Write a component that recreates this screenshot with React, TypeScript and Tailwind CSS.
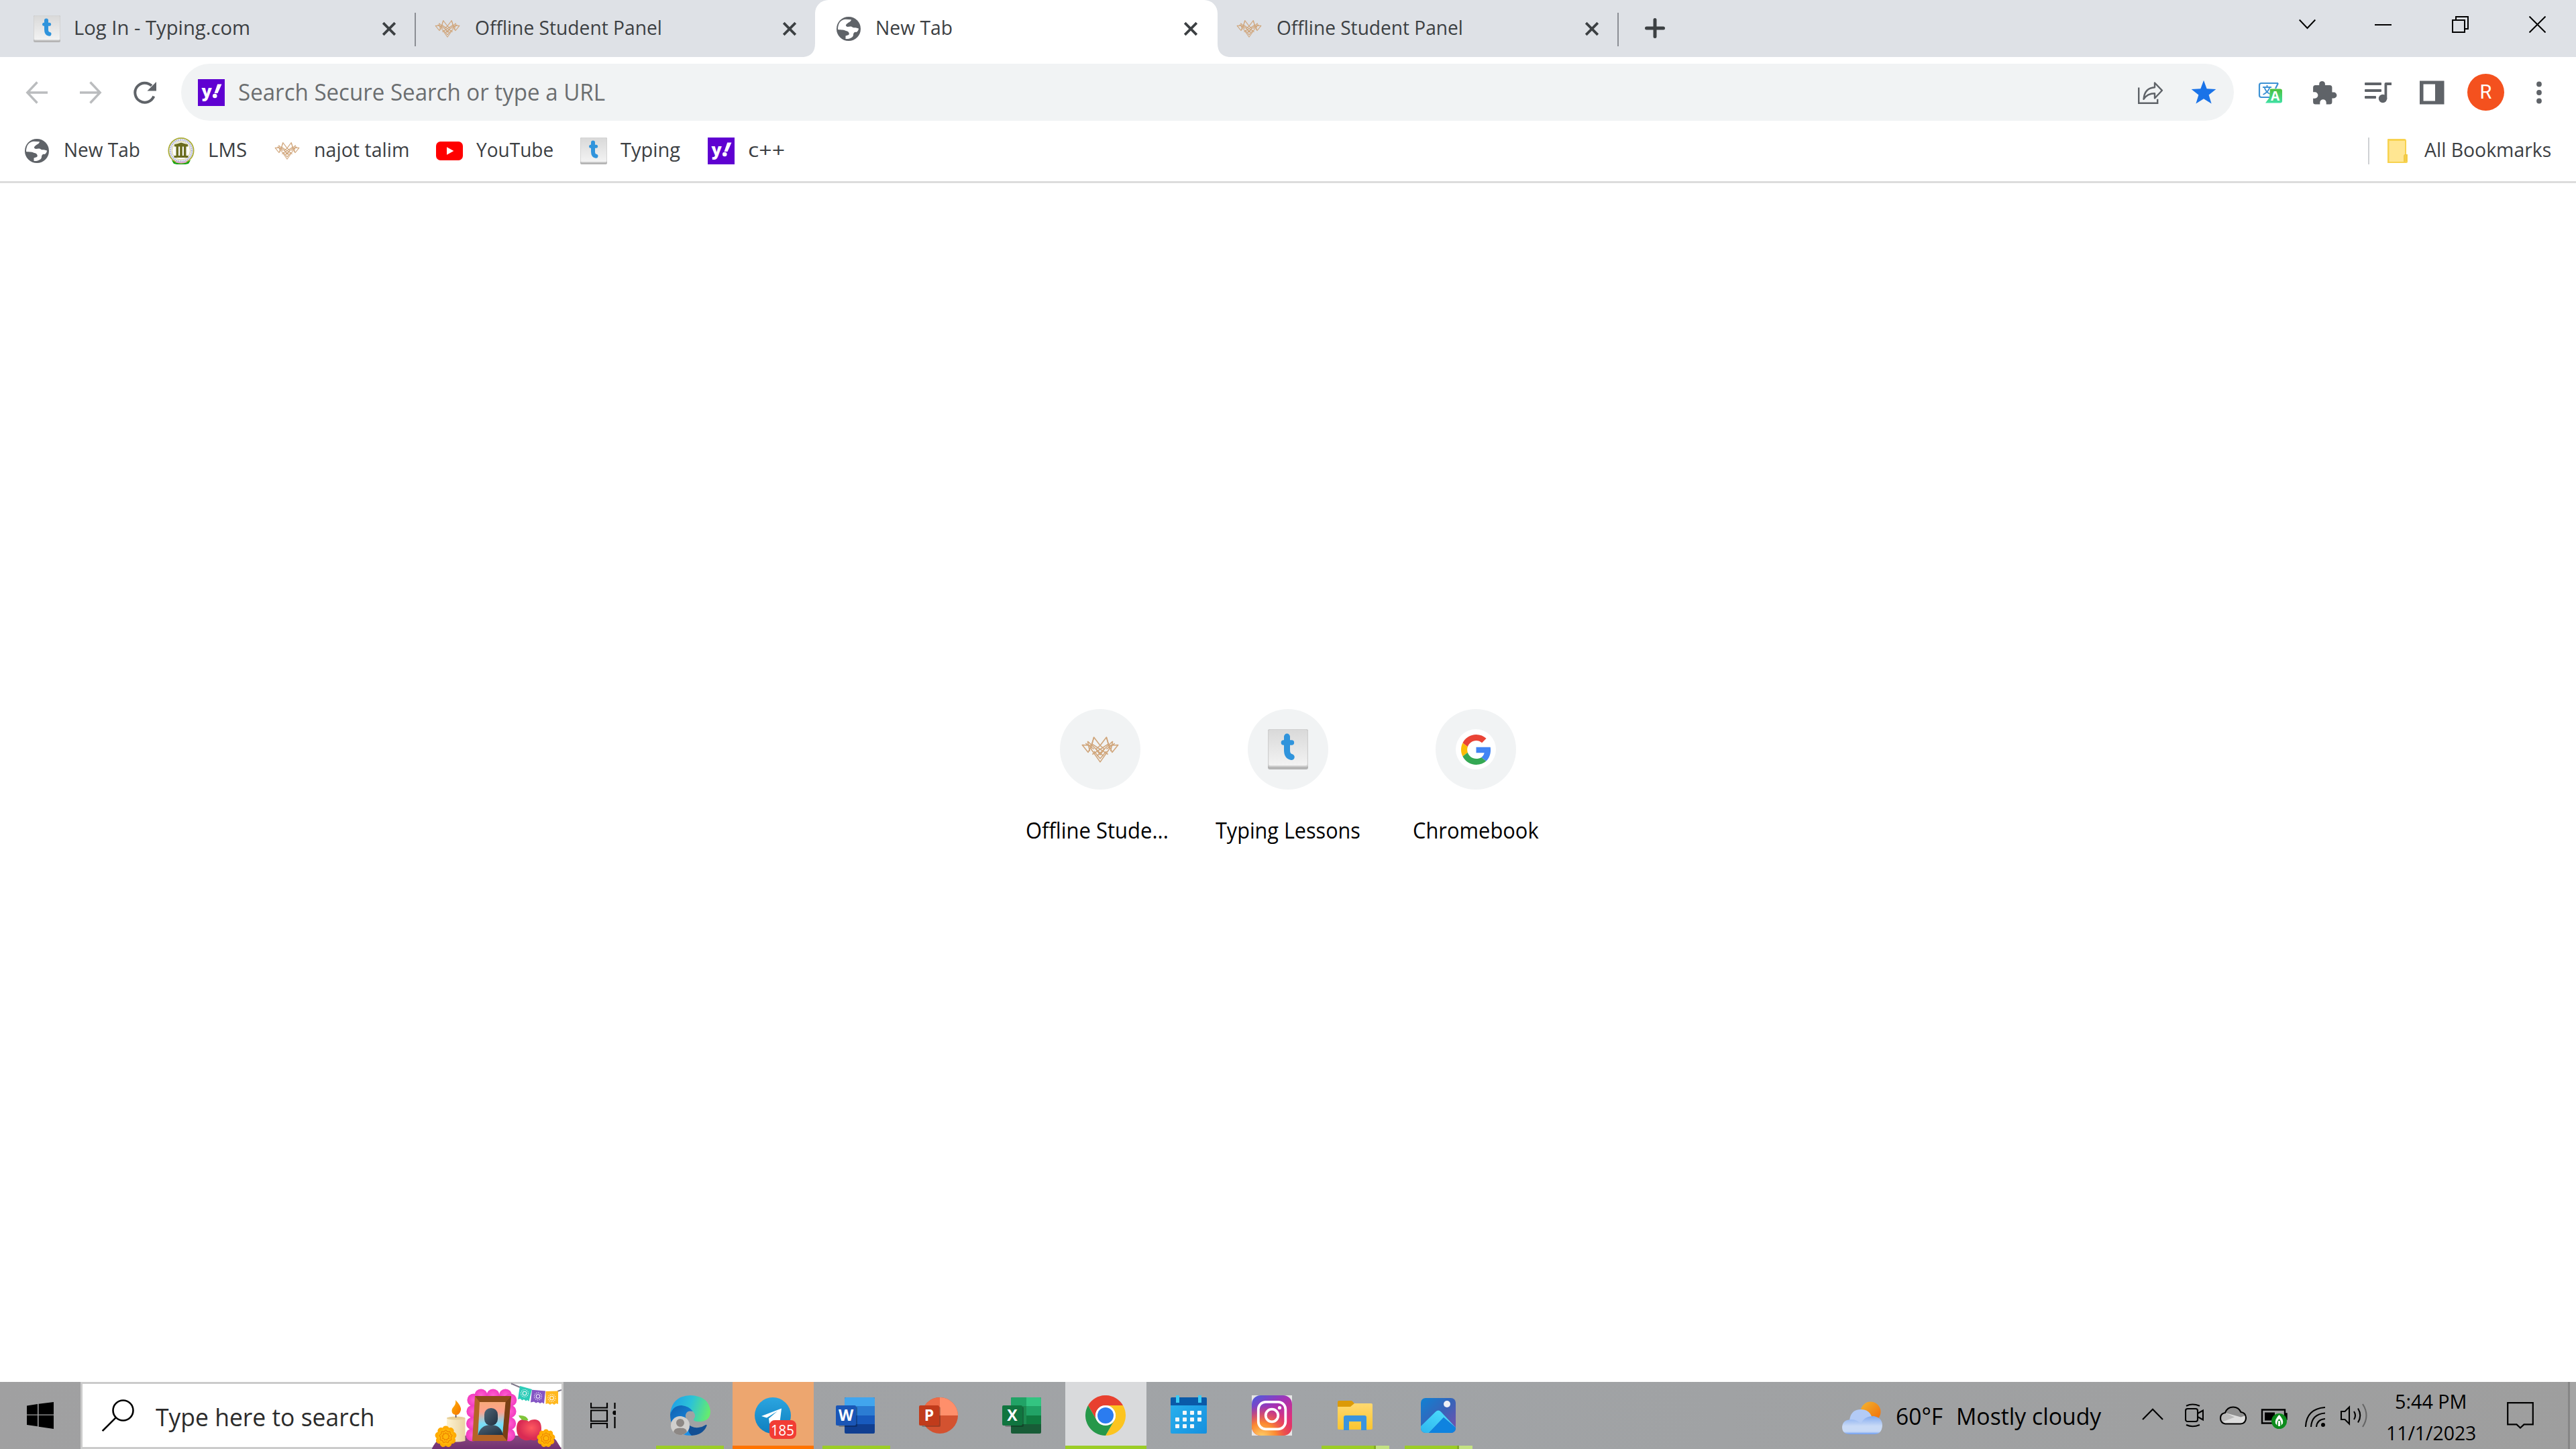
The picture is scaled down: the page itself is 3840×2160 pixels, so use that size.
import { useLayoutEffect, useRef, useState } from "react";
import type { ReactNode } from "react";

/* One line of text, condensed horizontally so it fills the width of its box. */
function Label({ children, className = "" }: { children: ReactNode; className?: string }) {
  const box = useRef<HTMLSpanElement>(null);
  const text = useRef<HTMLSpanElement>(null);
  const [scale, setScale] = useState(1);
  useLayoutEffect(() => {
    if (box.current && text.current) {
      setScale(box.current.clientWidth / text.current.offsetWidth);
    }
  }, []);
  return (
    <span ref={box} className={`block shrink-0 ${className}`}>
      <span
        ref={text}
        className="inline-block origin-left whitespace-nowrap"
        style={{ transform: `scaleX(${scale})` }}
      >
        {children}
      </span>
    </span>
  );
}

/* ---------- favicons ---------- */

function TypingIcon({ className = "size-10" }: { className?: string }) {
  return (
    <svg viewBox="0 0 40 40" className={`block shrink-0 ${className}`}>
      <defs>
        <linearGradient id="key" x1="0" y1="0" x2="0" y2="1">
          <stop offset="0" stopColor="#d9d9d9" />
          <stop offset="1" stopColor="#f3f3f3" />
        </linearGradient>
      </defs>
      <rect x="0" y="0" width="40" height="40" rx="2" fill="#b4b4b4" />
      <rect x="0" y="0" width="40" height="37.5" rx="2" fill="#cfcfcf" />
      <rect x="0.8" y="0.6" width="38.4" height="35.6" rx="1.6" fill="url(#key)" />
      <path d="M19 7.4v13.500q0 6 4.500 6.800" fill="none" stroke="#3094dc" strokeWidth="6" strokeLinecap="round" />
      <path d="M15.600 13.300h8" stroke="#3094dc" strokeWidth="5" strokeLinecap="round" />
    </svg>
  );
}

function NajotIcon({ className = "h-[26px] w-[38px]" }: { className?: string }) {
  return (
    <svg viewBox="0 0 36 25" className={`block shrink-0 ${className}`}>
      <g fill="none" stroke="#d0a57a" strokeWidth="1" strokeLinejoin="round">
        <path d="M12 .6 18 8.500 24 .6 27 11.500 18 24.300 9 11.500z" />
        <path d="M12 .6 10 7 25.500 17M24 .6 26 7 10.500 17" />
        <path d="M6 4.500 21 18.500M30 4.500 15 18.500M6 4.500 8 14M30 4.500 28 14" />
        <path d="M.8 8 6.500 15 9.500 8.500zM35.200 8 29.500 15 26.500 8.500z" />
        <path d="M12 14 18 21 24 14M14 12 18 17.500 22 12 18 8.500z" />
        <path d="M4 6.500 12 12M32 6.500 24 12" />
      </g>
    </svg>
  );
}

function GlobeIcon() {
  return (
    <svg viewBox="-2 -2 40 40" className="block size-10 shrink-0">
      <circle cx="18" cy="18" r="18" fill="#5f6368" />
      <path
        d="M2 19C2 10 6 4.500 13 3.800L22 4.200C21 8 18 8 16 10 14 11.500 13 13 15 14.500 17 15.800 20 13.500 23 15 25 17 28 15.500 33 17.500 33 20 31 22.500 29.500 23 27 22 25 24 25 27 25 30 21 33.500 13.500 33L13.500 28.500 18 27C20 25 18 21.500 14 21 11 19 8 20 2 19z"
        fill="#fff"
      />
    </svg>
  );
}

function YahooIcon() {
  return (
    <svg viewBox="0 0 40 40" className="block size-10 shrink-0">
      <rect width="40" height="40" fill="#5f01d1" />
      <text x="5.500" y="27" fontFamily="Open Sans" fontWeight="800" fontSize="25" fill="#fff">y</text>
      <path d="m29.200 7.500h6.300L29.500 21h-5z" fill="#fff" />
      <circle cx="25.300" cy="25" r="3.300" fill="#fff" />
    </svg>
  );
}

function LmsIcon() {
  return (
    <svg viewBox="0 0 40 40" className="block size-10 shrink-0">
      <path d="M6 34 12 35q8 5 16 0l6-1-3 5q-11 3-22 0z" fill="#12a312" />
      <circle cx="20" cy="19.500" r="18.600" fill="#fff" stroke="#a9ab35" strokeWidth="1.800" />
      <circle cx="20" cy="19.500" r="16" fill="none" stroke="#b6b9dc" strokeWidth="2.600" strokeDasharray="2 0.8" />
      <circle cx="20" cy="19.500" r="13.600" fill="#fff" stroke="#c9c06f" strokeWidth="0.9" />
      <path d="M12 36q8 2.500 16 0" stroke="#d9a9cf" strokeWidth="2" fill="none" />
      <g fill="#6a6c1e">
        <path d="M10 10.500 20 7.500l10 3v3H10zM12.500 13h3.600v14h-3.600zM18.200 13h3.600v14h-3.600zM23.900 13h3.600v14h-3.600zM9.500 27h21v3h-21z" />
      </g>
    </svg>
  );
}

function YouTubeIcon() {
  return (
    <svg viewBox="0 0 40 28" className="block h-7 w-10 shrink-0">
      <rect width="40" height="28" rx="6.500" fill="#f00" />
      <path d="m16 8.200 10.400 5.800L16 19.800z" fill="#fff" />
    </svg>
  );
}

function FolderIcon() {
  return (
    <svg viewBox="0 0 40 40" className="block size-10 shrink-0">
      <path d="M1 3q0-1 1-1h24q3 0 3 3v20h2v11q0 2-2 2H1z" fill="#f7d24f" />
      <path d="M3.500 5H27v20l-2 2v9H3.500z" fill="#ffe692" />
      <path d="M26 36V27q0-1.500 1.500-1.500h1.500V35" fill="none" stroke="#edc33f" strokeWidth="1.200" />
    </svg>
  );
}

/* ---------- tab strip ---------- */

function CloseX() {
  return (
    <svg viewBox="0 0 40 40" className="ml-auto block size-10 shrink-0" stroke="#3c4043" strokeWidth="3.800">
      <path d="m11.200 11.200 17.600 17.600M28.800 11.200 11.200 28.800" />
    </svg>
  );
}

function TabStrip() {
  return (
    <header className="flex h-[85px] bg-[#dee1e6] text-[29px] leading-[81px] text-[#3c4043]">
      <div className="ml-5 flex w-[598px] items-center pr-[18px] pl-[30px]">
        <TypingIcon />
        <Label className="-mt-1 ml-5 w-[263px]">Log In - Typing.com</Label>
        <CloseX />
      </div>
      <div className="mt-[19px] h-[50px] w-0.5 bg-[#8b8e94]" />
      <div className="flex w-[595px] items-center pr-[18px] pl-[28px]">
        <NajotIcon />
        <Label className="-mt-1 ml-[22px] w-[279px]">Offline Student Panel</Label>
        <CloseX />
      </div>
      <div className="relative flex w-[600px] items-center rounded-t-[20px] bg-white pr-5 pl-[30px]">
        <svg viewBox="0 0 20 20" className="absolute bottom-0 -left-5 size-5" fill="#fff">
          <path d="M20 0v20H3Q20 18 20 0z" />
        </svg>
        <GlobeIcon />
        <Label className="-mt-1 ml-5 w-[115px]">New Tab</Label>
        <CloseX />
        <svg viewBox="0 0 20 20" className="absolute -right-5 bottom-0 size-5" fill="#fff">
          <path d="M0 0v20h17Q0 18 0 0z" />
        </svg>
      </div>
      <div className="flex w-[596px] items-center pr-[18px] pl-[28px]">
        <NajotIcon />
        <Label className="-mt-1 ml-[22px] w-[278px]">Offline Student Panel</Label>
        <CloseX />
      </div>
      <div className="mt-[19px] h-[50px] w-0.5 bg-[#8b8e94]" />
      <svg viewBox="0 0 30 30" className="mt-[27px] ml-[39px] block size-[30px]" stroke="#3c4043" strokeWidth="5" strokeLinecap="round">
        <path d="M15 2.500v25M2.500 15h25" />
      </svg>
      <div className="ml-auto flex h-[73px] items-center pr-[45px]">
        <svg viewBox="0 0 25 25" className="block size-[25px]" fill="none" stroke="#000" strokeWidth="2">
          <path d="M.7 5.500 12.500 18 24.300 5.500" />
        </svg>
        <div className="ml-[88px] h-0.5 w-[25px] bg-black" />
        <svg viewBox="0 0 25 25" className="ml-[90px] block size-[25px]" fill="none" stroke="#000" strokeWidth="2">
          <path d="M1 6h18v18H1zM6 6V1h18v18h-5" />
        </svg>
        <svg viewBox="0 0 25 25" className="ml-[90px] block size-[25px]" stroke="#000" strokeWidth="2">
          <path d="m.5.5 24 24M24.500.5l-24 24" />
        </svg>
      </div>
    </header>
  );
}

/* ---------- toolbar ---------- */

function Toolbar() {
  return (
    <div className="flex h-[105px] items-center bg-white pr-[35px] pl-[35px]">
      <div className="flex gap-10">
        <svg viewBox="0 0 40 40" className="block size-10" fill="none" stroke="#babcbe" strokeWidth="3.400">
          <path d="M36 20H6M20.500 4.500 5.800 20l14.700 15.500" />
        </svg>
        <svg viewBox="0 0 40 40" className="block size-10" fill="none" stroke="#babcbe" strokeWidth="3.400">
          <path d="M4 20h30M19.500 4.500 34.200 20 19.500 35.500" />
        </svg>
        <svg viewBox="0 0 40 40" className="block size-10" fill="none" stroke="#5f6368" strokeWidth="4">
          <path d="M34.300 25.500A14.500 14.500 0 1 1 31 9.800" />
          <path d="M38 4v13.500H24.500z" fill="#5f6368" stroke="none" />
        </svg>
      </div>
      <div className="ml-[35px] flex h-[85px] w-[3060px] items-center rounded-full bg-[#f1f3f4] px-[25px]">
        <YahooIcon />
        <Label className="ml-5 w-[547px] text-[34px] leading-[83px] text-[#6b6e70]">
          Search Secure Search or type a URL
        </Label>
        <svg viewBox="0 0 40 40" className="ml-auto block size-10" fill="none" stroke="#5f6368" strokeWidth="2.400">
          <path d="M3.200 12.500v23.300h28v-6" />
          <path d="M27 5.500 38 16.800 27 28.500v-7.200q-11 0-16.500 8.500Q12 13 27 12.300z" strokeLinejoin="round" />
        </svg>
        <svg viewBox="0 0 40 40" className="ml-10 block size-10" fill="#1a73e8">
          <path d="m20 1.800 4.600 12.400 13.700.7-10.700 8.500 4 13.200L20 29.300 8.400 36.600l4-13.200L1.700 14.900l13.700-.7z" />
        </svg>
      </div>
      <div className="ml-[35px] flex items-center gap-10">
        <svg viewBox="0 0 40 40" className="block size-10">
          <defs>
            <linearGradient id="tr" x1="0" y1="0" x2="0" y2="1">
              <stop offset="0" stopColor="#4cc23c" />
              <stop offset="1" stopColor="#3fe0a4" />
            </linearGradient>
          </defs>
          <path d="M31 6H6Q3 6 3 9v15q0 3 3 3h12M31 6l-4 8" fill="none" stroke="#3d92d4" strokeWidth="2.200" />
          <path d="M8 12h13M14.500 9v3M18.500 12q-2 7-10 11M10.500 12q2 7 8 10" fill="none" stroke="#3d92d4" strokeWidth="1.900" />
          <path d="M19 14.500h15q3 0 3 3v15q0 3-3 3H12l6-8z" fill="url(#tr)" />
          <text x="20" y="32" fontFamily="Open Sans" fontWeight="700" fontSize="19" fill="#fff">A</text>
        </svg>
        <svg viewBox="0 0 40 40" className="block size-10" fill="#5f6368">
          <path d="M34 19.600h-2.600v-7a3.500 3.500 0 0 0-3.500-3.500h-7V6.700a4.400 4.400 0 0 0-8.700 0v2.400H6.600a3.500 3.500 0 0 0-3.500 3.500v6.700h2.600a4.700 4.700 0 0 1 0 9.400H3.100V34a3.500 3.500 0 0 0 3.500 3.500h6.700v-2.600a4.700 4.700 0 0 1 9.400 0v2.600h5.200a3.500 3.500 0 0 0 3.500-3.500v-5.600H34a4.400 4.400 0 0 0 0-8.800z" />
        </svg>
        <svg viewBox="0 0 40 40" className="block size-10" fill="#5f6368">
          <rect x="0" y="5" width="25" height="4" rx="1" />
          <rect x="0" y="15" width="25" height="4" rx="1" />
          <rect x="0" y="25" width="17" height="4" rx="1" />
          <circle cx="27" cy="29" r="6.200" />
          <path d="M29.500 30V7q0-2 2-2H40v4h-6.700v21z" />
        </svg>
        <svg viewBox="0 0 40 40" className="block size-10">
          <path d="M2 2.500h36.500v35H2z" fill="#5f6368" />
          <path d="M7.500 7.500H25v25H7.500z" fill="#fff" />
        </svg>
      </div>
      <div className="ml-[33px] flex size-[55px] items-center justify-center rounded-full bg-[#f4511e] font-[Roboto] text-[29px] text-white">
        R
      </div>
      <svg viewBox="0 0 40 40" className="ml-8 block size-10" fill="#5f6368">
        <circle cx="20" cy="7.500" r="3.900" />
        <circle cx="20" cy="20" r="3.900" />
        <circle cx="20" cy="32.500" r="3.900" />
      </svg>
    </div>
  );
}

/* ---------- bookmarks ---------- */

function Bookmark({ icon, label, width, textWidth }: { icon: ReactNode; label: string; width: string; textWidth: string }) {
  return (
    <div className={`flex items-center ${width}`}>
      <span className="flex w-10 justify-center">{icon}</span>
      <Label className={`-mt-1 ml-5 ${textWidth}`}>{label}</Label>
    </div>
  );
}

function BookmarksBar() {
  return (
    <nav className="flex h-[83px] items-start border-b-[3px] border-[#dcdcdc] bg-white pl-[35px] text-[29px] leading-[66px] text-[#3c4043]">
      <div className="flex h-[70px] flex-1 items-center">
        <Bookmark icon={<GlobeIcon />} label="New Tab" width="w-[215px]" textWidth="w-[114px]" />
        <Bookmark icon={<LmsIcon />} label="LMS" width="w-[158px]" textWidth="w-[58px]" />
        <Bookmark icon={<NajotIcon />} label="najot talim" width="w-[242px]" textWidth="w-[142px]" />
        <Bookmark icon={<YouTubeIcon />} label="YouTube" width="w-[215px]" textWidth="w-[115px]" />
        <Bookmark icon={<TypingIcon />} label="Typing" width="w-[190px]" textWidth="w-[89px]" />
        <Bookmark icon={<YahooIcon />} label="c++" width="w-[120px]" textWidth="w-[55px]" />
        <div className="ml-auto h-10 w-0.5 bg-[#cfd1d4]" />
        <div className="ml-[26px] flex w-[282px] items-center">
          <FolderIcon />
          <Label className="-mt-1 ml-4 w-[189px]">All Bookmarks</Label>
        </div>
      </div>
    </nav>
  );
}

/* ---------- new tab page ---------- */

function GoogleG() {
  return (
    <span className="flex size-[60px] items-center justify-center rounded-full bg-white">
      <svg viewBox="0 0 48 48" className="block size-[45px]">
        <path fill="#EA4335" d="M24 9.500c3.540 0 6.710 1.220 9.210 3.600l6.850-6.850C35.900 2.380 30.470 0 24 0 14.620 0 6.510 5.380 2.560 13.220l7.980 6.190C12.430 13.720 17.740 9.500 24 9.500z" />
        <path fill="#4285F4" d="M46.980 24.550c0-1.570-.15-3.090-.38-4.550H24v9.020h12.940c-.58 2.960-2.260 5.480-4.780 7.180l7.730 6c4.510-4.180 7.090-10.360 7.090-17.650z" />
        <path fill="#FBBC05" d="M10.530 28.590c-.48-1.450-.76-2.990-.76-4.590s.27-3.140.76-4.590l-7.980-6.190C.92 16.460 0 20.120 0 24c0 3.880.92 7.540 2.560 10.780l7.970-6.190z" />
        <path fill="#34A853" d="M24 48c6.480 0 11.930-2.130 15.890-5.810l-7.730-6c-2.150 1.450-4.920 2.300-8.160 2.300-6.260 0-11.570-4.220-13.470-9.910l-7.980 6.190C6.510 42.620 14.620 48 24 48z" />
      </svg>
    </span>
  );
}

function Shortcut({ icon, label, textWidth }: { icon: ReactNode; label: string; textWidth: string }) {
  return (
    <div className="flex w-[280px] flex-col items-center">
      <div className="flex size-[120px] items-center justify-center rounded-full bg-[#f1f3f4]">{icon}</div>
      <Label className={`mt-[41px] text-[32px] leading-[40px] text-black ${textWidth}`}>{label}</Label>
    </div>
  );
}

function NewTabPage() {
  return (
    <main className="flex flex-1 justify-center bg-white pt-[784px]">
      <Shortcut icon={<NajotIcon className="h-[39px] w-14" />} label="Offline Stude..." textWidth="w-[213px] -ml-[9px]" />
      <Shortcut icon={<TypingIcon className="size-[60px]" />} label="Typing Lessons" textWidth="w-[216px]" />
      <Shortcut icon={<GoogleG />} label="Chromebook" textWidth="w-[188px]" />
    </main>
  );
}

/* ---------- taskbar ---------- */

const PETALS = [0, 40, 80, 120, 160, 200, 240, 280, 320];

function Marigold({ x, y, r }: { x: number; y: number; r: number }) {
  return (
    <g transform={`translate(${x} ${y}) scale(${r / 10})`}>
      {PETALS.map((a) => (
        <circle key={a} cx="0" cy="-7" r="3.200" fill="#ffab00" transform={`rotate(${a})`} />
      ))}
      <circle r="7.500" fill="#ffb70a" />
      {PETALS.map((a) => (
        <path key={a} d="M-2-6q2 2 4 0M-1.500-3.500q1.500 1.500 3 0" stroke="#ef8500" strokeWidth="0.8" fill="none" transform={`rotate(${a + 20})`} />
      ))}
    </g>
  );
}

const SCALLOPS = [
  [77, 20], [95, 20], [113.5, 20], [66, 27], [65, 44], [64.6, 62], [64, 79],
  [120.7, 27], [120, 44], [119.6, 62], [118.5, 79],
];

function OfrendaArt() {
  return (
    <svg viewBox="0 0 197 100" className="-my-[3px] ml-auto block h-[100px] w-[197px] shrink-0">
      <defs>
        <linearGradient id="cloth" x1="0" y1="0" x2="0" y2="1">
          <stop offset="0" stopColor="#8a4a80" />
          <stop offset="1" stopColor="#703070" />
        </linearGradient>
        <linearGradient id="wax" x1="0" y1="0" x2="1" y2="0">
          <stop offset="0" stopColor="#fdf3d3" />
          <stop offset="1" stopColor="#e9d3a2" />
        </linearGradient>
        <linearGradient id="flame" x1="0" y1="0" x2="1" y2="1">
          <stop offset="0" stopColor="#ffb300" />
          <stop offset="1" stopColor="#f57200" />
        </linearGradient>
        <radialGradient id="pink">
          <stop offset="0" stopColor="#ff5fcf" />
          <stop offset="1" stopColor="#f23bbf" />
        </radialGradient>
        <linearGradient id="sky" x1="0" y1="0" x2="0" y2="1">
          <stop offset="0" stopColor="#f7a879" />
          <stop offset="0.3" stopColor="#ffa28d" />
          <stop offset="0.65" stopColor="#7fdcf5" />
          <stop offset="1" stopColor="#4fe0f7" />
        </linearGradient>
        <linearGradient id="man" x1="0" y1="0" x2="1" y2="1">
          <stop offset="0" stopColor="#4f6678" />
          <stop offset="1" stopColor="#22303f" />
        </linearGradient>
        <radialGradient id="apple" cx="0.6" cy="0.4">
          <stop offset="0" stopColor="#ff5a5f" />
          <stop offset="1" stopColor="#d92b54" />
        </radialGradient>
      </defs>
      <path d="M3.600 100Q8 90 16 84L50 80h132L189 87l8 13z" fill="url(#cloth)" />
      <path d="M26 54q14-4 27.500 0v34q-14 3-27.500 0z" fill="url(#wax)" />
      <ellipse cx="39.700" cy="54" rx="13.700" ry="2.500" fill="#e8cf98" />
      <path d="M39.600 46v7" stroke="#4b3a52" strokeWidth="1.500" />
      <path d="M39 27q9 9 8 15-2 8-8 7-6-1-5.500-7 .5-3 3.500-6 3-4 2-9z" fill="url(#flame)" />
      {SCALLOPS.map(([x, y]) => (
        <circle key={`${x}-${y}`} cx={x} cy={y} r="9.600" fill="url(#pink)" />
      ))}
      <path d="M68 21h54l-6 67H64z" fill="#b46425" />
      <path d="m68 21 7 9h38.500l8.500-9z" fill="#8d4a18" />
      <path d="m122 21-8.500 9L109 79l7 9z" fill="#7a3f14" />
      <path d="M75 30h38.500L109 79H72.500z" fill="url(#sky)" />
      <path d="M72.500 79q4-15 19-15 15 0 18.500 15z" fill="url(#man)" />
      <rect x="82" y="39" width="20" height="26" rx="9.500" fill="url(#man)" />
      <path d="M130 70q0-14 10-14 5 0 8 3 3-3 9-3 10 0 10 14 0 10-8 17-5 1-8-1-4 2-9 1-12-4-12-17z" fill="url(#apple)" />
      <path d="M133 50q12-1 14.500 7-11 2-14.500-7z" fill="#7fc53a" />
      <Marigold x={24.5} y={81.5} r={15.8} />
      <Marigold x={174} y={84} r={13.3} />
      <path d="M122 2.500 135 8M191 14l6-2" stroke="#7e7889" strokeWidth="2" />
      <path d="m135 6 18 5-4.500 18-2.500-2-2 1.500-3-2.500-2.500 1.500-3-2.500-3.500 1z" fill="#2dccb8" />
      <path d="m153 11.700 20 1.800-2 19-3-2-3 1.500-3-2-3 1.500-3-2-5 1z" fill="#8455c4" />
      <path d="M173.500 14 192 13.500V33l-3-1-3 2-3-2-3 2-3-2-3.500 1z" fill="#ffb81f" />
      <g fill="none" stroke="#fff" strokeWidth="1.100" opacity="0.9">
        <circle cx="142" cy="17" r="2.800" />
        <circle cx="162" cy="21.500" r="2.800" />
        <circle cx="182.500" cy="24" r="2.800" />
        <circle cx="142" cy="17" r="5.500" strokeDasharray="1.400 1.400" />
        <circle cx="162" cy="21.500" r="5.500" strokeDasharray="1.400 1.400" />
        <circle cx="182.500" cy="24" r="5.500" strokeDasharray="1.400 1.400" />
      </g>
    </svg>
  );
}

function EdgeIcon() {
  return (
    <svg viewBox="0 0 60 60" className="block size-[60px]">
      <defs>
        <linearGradient id="e1" x1="0" y1="0.3" x2="1" y2="0.5">
          <stop offset="0" stopColor="#1f9fe8" />
          <stop offset="0.5" stopColor="#2cc3d6" />
          <stop offset="1" stopColor="#66eb6e" />
        </linearGradient>
        <linearGradient id="e2" x1="0" y1="0" x2="0.6" y2="1">
          <stop offset="0" stopColor="#0f5fae" />
          <stop offset="1" stopColor="#1b8fe6" />
        </linearGradient>
      </defs>
      <path d="M0 28q2-14 17-14 14 0 17 10-9-2-11 5-1 10 7 18l2 13Q12 60 4 46 0 38 0 28z" fill="url(#e2)" />
      <path d="M26 42q6 7 16 6 6-.5 11-4 2-1 1.500 1.500Q49 59 32 60q-6-4-6-18z" fill="#124f94" />
      <path d="M0 29Q2 1 30 0q28 1 30 24 0 13-13 15-7 1-11-1-2-2 0-4 3-5-2-10-6-8-17-9Q4 15 0 29z" fill="url(#e1)" />
      <circle cx="15" cy="45" r="14" fill="#d0cfcd" />
      <circle cx="15" cy="41" r="6" fill="#8d8885" />
      <path d="M5 54.500q1-6 10-6t10 6q-4 4.500-10 4.500T5 54.500z" fill="#8d8885" />
    </svg>
  );
}

function TelegramIcon() {
  return (
    <span className="relative -ml-0.5 block size-[54px]">
      <svg viewBox="0 0 54 54" className="block size-[54px]">
        <defs>
          <linearGradient id="tg" x1="0" y1="0" x2="0" y2="1">
            <stop offset="0" stopColor="#2ba5e0" />
            <stop offset="1" stopColor="#0f7fbf" />
          </linearGradient>
        </defs>
        <circle cx="27" cy="27" r="27" fill="url(#tg)" />
        <path d="M10 28 40 16.500l-3 24-9-6-6 5-1-8 13-11-16 10z" fill="#fff" />
      </svg>
      <span className="absolute top-[34px] left-[22px] flex h-7 w-10 items-center justify-center rounded-lg bg-[#f23c34] text-[22px] leading-none text-white">
        <Label className="w-[35px] leading-7">185</Label>
      </span>
    </span>
  );
}

function OfficeIcon({ kind }: { kind: "W" | "P" | "X" }) {
  const tile = { W: "#1a56b6", P: "#c13b1b", X: "#10753f" }[kind];
  return (
    <svg viewBox="0 0 58 54" className="-ml-[3px] block h-[54px] w-[58px]">
      {kind === "W" && (
        <>
          <rect x="13" y="0" width="45" height="54" rx="2" fill="#103f91" />
          <path d="M13 27h45v13H13z" fill="#185abd" />
          <path d="M13 13h45v14H13z" fill="#2b7cd3" />
          <path d="M13 13V2q0-2 2-2h41q2 0 2 2v11z" fill="#41a5ee" />
        </>
      )}
      {kind === "P" && (
        <>
          <circle cx="31" cy="27" r="27" fill="#d35230" />
          <path d="M31 0a27 27 0 0 1 27 27H31z" fill="#ff8f6b" />
          <path d="M31 0A27 27 0 0 0 4 27h27z" fill="#ed6c47" />
        </>
      )}
      {kind === "X" && (
        <>
          <rect x="13" y="0" width="45" height="54" rx="2" fill="#185c37" />
          <path d="M13 13h23v27H13z" fill="#1d8a50" />
          <path d="M36 27h22v13H36z" fill="#107c41" />
          <path d="M36 13h22v14H36z" fill="#21a366" />
          <path d="M13 13V2q0-2 2-2h21v13z" fill="#21a366" />
          <path d="M36 0h20q2 0 2 2v11H36z" fill="#33c481" />
        </>
      )}
      <rect x="4" y="14" width="28" height="30" rx="2" fill="#000" opacity="0.25" />
      <rect x="0" y="12" width="30" height="30" rx="2" fill={tile} />
      <text x="15" y="35" textAnchor="middle" fontFamily="Open Sans" fontWeight="700" fontSize="23" fill="#fff">
        {kind}
      </text>
    </svg>
  );
}

function ChromeIcon() {
  return (
    <svg viewBox="0 0 60 60" className="-ml-px block size-[60px]">
      <path d="M4 15A30 30 0 0 1 56 15H30A15 15 0 0 0 17 37.500z" fill="#e8402f" />
      <path d="M56 15A30 30 0 0 1 30 60L43 37.500A15 15 0 0 0 30 15z" fill="#fcc420" />
      <path d="M30 60A30 30 0 0 1 4 15L17 37.500A15 15 0 0 0 43 37.500z" fill="#26984a" />
      <circle cx="30" cy="30" r="15" fill="#fff" />
      <circle cx="30" cy="30" r="12" fill="#2b7cf0" />
    </svg>
  );
}

const DAYS = [
  [18, 23], [29, 23], [40, 23], [7, 33], [18, 33], [29, 33], [40, 33], [7, 43], [18, 43], [29, 43],
];

function CalendarIcon() {
  return (
    <svg viewBox="0 0 54 60" className="-ml-px block h-[60px] w-[54px]">
      <defs>
        <linearGradient id="cal" x1="0" y1="0" x2="1" y2="1">
          <stop offset="0" stopColor="#2bb3ee" />
          <stop offset="1" stopColor="#1590df" />
        </linearGradient>
      </defs>
      <rect x="0" y="3" width="54" height="54" rx="2" fill="url(#cal)" />
      <path d="M0 15V5q0-2 2-2h50q2 0 2 2v10z" fill="#0a5aa8" />
      <path d="M8 0h5v11H8zM41 0h5v11h-5z" fill="#3ccbf4" />
      {DAYS.map(([x, y]) => (
        <rect key={`${x}-${y}`} x={x} y={y} width="6" height="6" rx="1" fill="#f3f6f8" />
      ))}
    </svg>
  );
}

function InstagramIcon() {
  return (
    <svg viewBox="0 0 60 60" className="-ml-px block size-[60px]">
      <defs>
        <linearGradient id="ig1" x1="0.2" y1="0" x2="0.8" y2="1">
          <stop offset="0" stopColor="#5a56d6" />
          <stop offset="0.35" stopColor="#a632b4" />
          <stop offset="0.75" stopColor="#e0307a" />
          <stop offset="1" stopColor="#e33a5c" />
        </linearGradient>
        <radialGradient id="ig2" cx="0.25" cy="1.05" r="0.8">
          <stop offset="0" stopColor="#ffd36b" />
          <stop offset="0.45" stopColor="#fb8a32" />
          <stop offset="1" stopColor="#f0483e" stopOpacity="0" />
        </radialGradient>
      </defs>
      <rect width="60" height="60" fill="#e6e6e6" />
      <rect width="60" height="60" rx="13" fill="url(#ig1)" />
      <rect width="60" height="60" rx="13" fill="url(#ig2)" />
      <rect x="9.800" y="9.800" width="40.500" height="40.500" rx="11" fill="none" stroke="#fff" strokeWidth="3.800" />
      <circle cx="30" cy="30" r="9.300" fill="none" stroke="#fff" strokeWidth="3.800" />
      <circle cx="41.500" cy="18.500" r="2.600" fill="#fff" />
    </svg>
  );
}

function ExplorerIcon() {
  return (
    <svg viewBox="0 0 52 45" className="-ml-px block h-[45px] w-[52px]">
      <defs>
        <linearGradient id="fold" x1="0" y1="0" x2="0" y2="1">
          <stop offset="0" stopColor="#ffd970" />
          <stop offset="1" stopColor="#fbc52f" />
        </linearGradient>
      </defs>
      <path d="M0 9V2q0-2 2-2h18q2 0 3 2l3 3v6H0z" fill="#dc9a07" />
      <path d="M0 9h19l6-5h25q2 0 2 2v35q0 2-2 2H2q-2 0-2-2z" fill="url(#fold)" />
      <path d="M9 44V25q0-3 3-3h28q3 0 3 3v19h-8V31H17v13z" fill="#3a94de" />
    </svg>
  );
}

function PhotosIcon() {
  return (
    <svg viewBox="0 0 52 52" className="-ml-px block size-[52px]">
      <defs>
        <linearGradient id="ph" x1="0" y1="0" x2="1" y2="1">
          <stop offset="0" stopColor="#0f82d4" />
          <stop offset="0.5" stopColor="#3863b8" />
          <stop offset="1" stopColor="#7b4fae" />
        </linearGradient>
        <linearGradient id="hill" x1="0" y1="1" x2="1" y2="0">
          <stop offset="0" stopColor="#2cb5ee" />
          <stop offset="1" stopColor="#52e4ff" />
        </linearGradient>
        <clipPath id="phc">
          <rect width="52" height="52" rx="7" />
        </clipPath>
      </defs>
      <g clipPath="url(#phc)">
        <rect width="52" height="52" fill="url(#ph)" />
        <path d="M22 20.500q4-4 8 0L54 46 34 29 12 52H-2V44z" fill="url(#hill)" />
        <path d="M10 54 34 29 54 46v8z" fill="#0f83df" />
      </g>
      <circle cx="39" cy="9" r="5" fill="#eef0f5" />
    </svg>
  );
}

function AppButton({
  icon,
  bar,
  className = "",
}: {
  icon: ReactNode;
  bar?: ReactNode;
  className?: string;
}) {
  return (
    <div className={`flex w-[121px] flex-col pt-[5px] ${className}`}>
      <div className="flex flex-1 items-center justify-center">{icon}</div>
      <div className="flex h-[5px] justify-center">{bar}</div>
    </div>
  );
}

function StackedBar() {
  return (
    <>
      <div className="w-[78px] bg-[#9bcd26]" />
      <div className="w-[3px] bg-[#83ad24]" />
      <div className="w-5 bg-[#c3e282]" />
    </>
  );
}

function WeatherIcon() {
  return (
    <svg viewBox="0 0 60 50" className="block h-[50px] w-[60px]">
      <defs>
        <linearGradient id="sun" x1="0" y1="0" x2="1" y2="1">
          <stop offset="0" stopColor="#f2b530" />
          <stop offset="1" stopColor="#f26a0a" />
        </linearGradient>
        <linearGradient id="cl" x1="0" y1="0" x2="0" y2="1">
          <stop offset="0" stopColor="#82aaf0" />
          <stop offset="0.55" stopColor="#c9daf6" />
          <stop offset="0.85" stopColor="#c8daf6" />
          <stop offset="1" stopColor="#6a9af0" />
        </linearGradient>
      </defs>
      <circle cx="42.500" cy="15.500" r="15" fill="url(#sun)" />
      <path d="M11 28Q13 12 28 12q13 0 17 13l-5 16H14z" fill="#b3cbf6" />
      <path d="M14 27q9 0 14 7 4-12 19-12 13 2 13 14-1 13-12 13H12Q0 49 0 38 1 27 14 27z" fill="url(#cl)" />
    </svg>
  );
}

function SystemTray() {
  return (
    <>
      <svg viewBox="0 0 32 18" className="-mt-1 ml-[61px] block h-[18px] w-8" fill="none" stroke="#000" strokeWidth="2.200">
        <path d="M1 17 16 1.800 31 17" />
      </svg>
      <svg viewBox="0 0 28 36" className="ml-8 block h-9 w-7" fill="none" stroke="#000" strokeWidth="2.100">
        <rect x="1" y="8" width="18" height="19" rx="3" />
        <path d="m19 15 8-4.500v14L19 20M2 3.800q9-4.500 20 0M2 32q9 4.500 20 0" />
      </svg>
      <svg viewBox="0 0 40 28" className="ml-6 block h-7 w-10">
        <path d="M8 26.500Q1 25 1 18q0-7 7-8Q11 1.500 20 1.500q8 0 11.500 7.500Q39 10 39 18q-.5 8-8 8.500z" fill="#dcdcdc" />
        <path d="M8 10Q11 1.500 20 1.500q8 0 11.500 7.500 5 1 7 5l-7 2.500z" fill="#8f8f8f" />
        <path d="M1 19q0-8 7-9l14 6.500L3 24z" fill="#b9b9b9" />
        <path d="M8 26.500Q1 25 1 18q0-7 7-8Q11 1.500 20 1.500q8 0 11.500 7.500Q39 10 39 18q-.5 8-8 8.500z" fill="none" stroke="#000" strokeWidth="2.100" />
      </svg>
      <svg viewBox="0 0 40 30" className="mt-2.5 ml-[21px] block h-[30px] w-10">
        <path d="M2 1.500h34v20H2zM36 7.500h2.500v8H36" fill="none" stroke="#000" strokeWidth="2.400" />
        <path d="M6 5.500h15v12H6z" />
        <circle cx="27.500" cy="18.500" r="11.500" fill="#0c8b1c" />
        <path d="M27.500 9q-7 7-5.500 13l3 3q-2-5 2.500-10 4.500 5 2.500 10l3-3q1.500-6-5.500-13zM26 18h3v8h-3z" fill="#fff" />
      </svg>
      <svg viewBox="0 0 30 30" className="mt-1 ml-[26px] block size-[30px]" fill="none" stroke="#000" strokeWidth="2.100">
        <path d="M1 30Q2 3 30 1M9 30Q10 11 30 9.500M17 30Q18 19 30 18" />
        <circle cx="27" cy="27" r="3" fill="#000" stroke="none" />
      </svg>
      <svg viewBox="0 0 42 36" className="ml-[22px] block h-9 w-[42px]" fill="none" stroke="#000" strokeWidth="2.100">
        <path d="M2 12h5.500L14 5.500v25L7.500 24H2zM21 12q4 6 0 12M27 7.500q6.500 10.500 0 21" />
        <path d="M34 1q11 17 0 34" stroke="#666" />
      </svg>
      <div className="mt-[3px] ml-[26px] flex w-[135px] flex-col items-center text-[29px] leading-[47px]">
        <Label className="w-[107px]">5:44 PM</Label>
        <Label className="w-[134px]">11/1/2023</Label>
      </div>
      <svg viewBox="0 0 40 40" className="ml-[46px] block size-10" fill="none" stroke="#000" strokeWidth="2.200">
        <path d="M1.200 1.200h37.600v32.200H25.500L20 38.500l-5.500-5.100H1.200z" />
      </svg>
      <div className="ml-[51px] h-[100px] w-[3px] bg-[#868686]" />
      <div className="h-[100px] w-[9px] bg-[#a4a4a4]" />
    </>
  );
}

function Taskbar() {
  return (
    <footer className="flex h-[100px] bg-linear-to-r from-[#a0a0a1] via-[#a1a4a7] to-[#9e9e9e] text-black">
      <div className="flex w-[120px] items-center justify-center">
        <svg viewBox="0 0 40 40" className="block size-10">
          <path d="M0 5.500 16 3v15.400H0zM17.600 2.700 40 0v18.400H17.600zM0 19.800h16v16.400L0 34zM17.600 19.800H40V40l-22.400-3.300z" />
        </svg>
      </div>
      <div className="flex w-[720px] items-center border-[3px] border-[#cbcbcb] bg-white">
        <svg viewBox="0 0 48 48" className="ml-[29px] block size-12" fill="none" stroke="#000" strokeWidth="2.600">
          <circle cx="31.500" cy="16.500" r="15" />
          <path d="M20.800 27.200.8 47" />
        </svg>
        <Label className="mt-0.5 ml-8 w-[326px] text-[37px] leading-[97px] text-[#2b2b2b]">Type here to search</Label>
        <OfrendaArt />
      </div>
      <div className="flex w-32 items-center pl-10">
        <svg viewBox="0 0 38 38" className="block size-[38px]" fill="none" stroke="#000" strokeWidth="2.200">
          <path d="M1 0v7.500h24V0M1 11.500h24v16H1zM1 38v-7h24v7M36.500 0v9M36.500 21v17" />
          <circle cx="36.500" cy="15" r="3.200" fill="#000" stroke="none" />
        </svg>
      </div>
      <div className="flex gap-[3px]">
        <AppButton icon={<EdgeIcon />} bar={<div className="w-[101px] bg-[#9bcd26]" />} />
        <AppButton
          icon={<TelegramIcon />}
          bar={<div className="w-full bg-[#ff7300]" />}
          className="bg-[#eda66f]"
        />
        <AppButton icon={<OfficeIcon kind="W" />} bar={<div className="w-[101px] bg-[#9bcd26]" />} />
        <AppButton icon={<OfficeIcon kind="P" />} />
        <AppButton icon={<OfficeIcon kind="X" />} />
        <AppButton
          icon={<ChromeIcon />}
          bar={<div className="w-full bg-[#9bcd26]" />}
          className="bg-[#d9dadc]"
        />
        <AppButton icon={<CalendarIcon />} />
        <AppButton icon={<InstagramIcon />} />
        <AppButton icon={<ExplorerIcon />} bar={<StackedBar />} />
        <AppButton icon={<PhotosIcon />} bar={<StackedBar />} />
      </div>
      <div className="ml-auto flex items-center">
        <div className="mt-2">
          <WeatherIcon />
        </div>
        <Label className="ml-5 w-[70px] text-[35px] leading-[101px]">60°F</Label>
        <Label className="ml-5 w-[216px] text-[35px] leading-[101px]">Mostly cloudy</Label>
        <SystemTray />
      </div>
    </footer>
  );
}

export default function App() {
  return (
    <div className="flex h-[2160px] w-[3840px] flex-col overflow-hidden bg-white font-['Open_Sans',sans-serif]">
      <TabStrip />
      <Toolbar />
      <BookmarksBar />
      <NewTabPage />
      <Taskbar />
    </div>
  );
}
